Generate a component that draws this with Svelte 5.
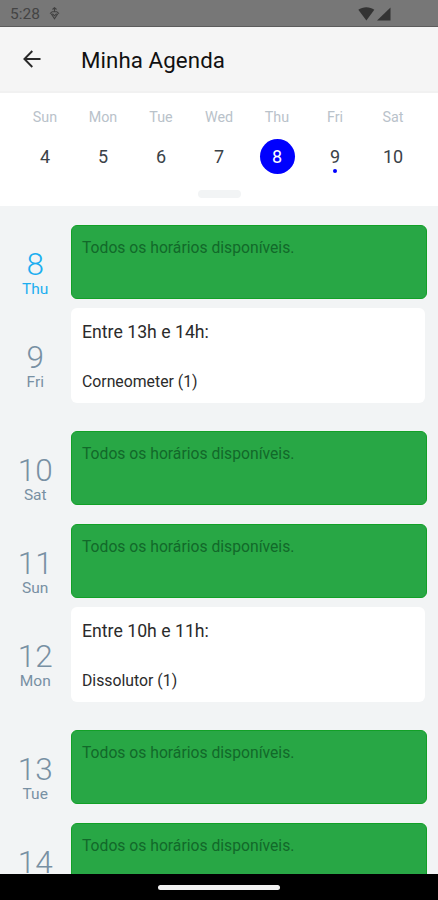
<script>
  const week = [
    { name: 'Sun', day: 4 },
    { name: 'Mon', day: 5 },
    { name: 'Tue', day: 6 },
    { name: 'Wed', day: 7 },
    { name: 'Thu', day: 8, selected: true },
    { name: 'Fri', day: 9, marked: true },
    { name: 'Sat', day: 10 }
  ];

  const agenda = [
    { day: 8, name: 'Thu', today: true },
    { day: 9, name: 'Fri', time: 'Entre 13h e 14h:', item: 'Corneometer (1)' },
    { day: 10, name: 'Sat' },
    { day: 11, name: 'Sun' },
    { day: 12, name: 'Mon', time: 'Entre 10h e 11h:', item: 'Dissolutor (1)' },
    { day: 13, name: 'Tue' },
    { day: 14 }
  ];
</script>

<div class="screen">
  <div class="status">
    <span class="clock">5:28</span>
    <svg class="debug" width="11" height="13" viewBox="0 0 11 13" fill="none" stroke="#404040" stroke-width="1.1">
      <path d="M5.5 0.6V4.5M3.5 2.5L5.5 0.7L7.5 2.5M1 6.7L3.2 4.7H7.8L10 6.7M2.2 6.8L5.5 11.8L8.8 6.8M3.4 6.6L5.5 8.8L7.6 6.6" />
    </svg>
    <svg class="signals" width="33" height="14" viewBox="0 0 33 14" fill="#333">
      <path d="M0.3 2.8C4.7 -0.7 12 -0.7 16.3 2.8L8.4 13.5Z" />
      <path d="M32.5 0.4V13.5H19Z" />
    </svg>
  </div>

  <header>
    <svg width="18" height="18" viewBox="0 0 18 18" fill="none" stroke="#292929" stroke-width="1.9">
      <path d="M17.5 9H1.5M9.3 1L1.4 9L9.3 17" />
    </svg>
    <h1>Minha Agenda</h1>
  </header>

  <section class="calendar">
    <div class="week">
      {#each week as d}
        <div class="column">
          <span class="weekday">{d.name}</span>
          <span class="date" class:selected={d.selected}>
            {d.day}
            {#if d.marked}<i class="dot"></i>{/if}
          </span>
        </div>
      {/each}
    </div>
    <div class="knob"></div>
  </section>

  <main>
    {#each agenda as a}
      <div class="row">
        <div class="label" class:today={a.today}>
          <span class="num">{a.day}</span>
          {#if a.name}<span class="name">{a.name}</span>{/if}
        </div>
        {#if a.time}
          <div class="card booked">
            <p class="time">{a.time}</p>
            <p class="item">{a.item}</p>
          </div>
        {:else}
          <div class="card free">Todos os horários disponíveis.</div>
        {/if}
      </div>
    {/each}
  </main>

  <footer><div class="pill"></div></footer>
</div>

<style>
  :global(body) {
    margin: 0;
  }
  .screen {
    width: 438px;
    height: 900px;
    display: flex;
    flex-direction: column;
    overflow: hidden;
    background: #f2f4f5;
    font-family: Roboto, 'Liberation Sans', sans-serif;
  }
  .status {
    flex: none;
    box-sizing: border-box;
    height: 27px;
    padding: 1px 47px 0 10px;
    display: flex;
    align-items: center;
    background: #777;
    border-bottom: 1px solid #5c5c5c;
    color: #444;
  }
  .clock {
    width: 39px;
    font-size: 15.5px;
    line-height: 20px;
  }
  .signals {
    margin-left: auto;
  }
  header {
    flex: none;
    box-sizing: border-box;
    height: 66px;
    padding: 0 23px;
    display: flex;
    align-items: center;
    gap: 40px;
    background: #f5f5f5;
    border-bottom: 2px solid #f1f1f1;
  }
  h1 {
    margin: 1px 0 0;
    font-size: 22.3px;
    line-height: 28px;
    font-weight: 400;
    letter-spacing: 0.08px;
    color: #111;
  }
  .calendar {
    flex: none;
    height: 113px;
    display: flex;
    flex-direction: column;
    align-items: center;
    background: #fff;
  }
  .week {
    width: 406px;
    height: 97px;
    display: flex;
  }
  .column {
    flex: 1;
    display: flex;
    flex-direction: column;
    align-items: center;
  }
  .weekday {
    margin-top: 15px;
    font-size: 14.3px;
    line-height: 18px;
    color: #b9c2ca;
  }
  .date {
    position: relative;
    width: 35px;
    height: 35px;
    margin-top: 13px;
    border-radius: 50%;
    font-size: 18px;
    line-height: 35px;
    text-align: center;
    color: #3a4248;
  }
  .selected {
    background: #0000fe;
    color: #fff;
  }
  .dot {
    position: absolute;
    left: 15.5px;
    top: 30px;
    width: 4px;
    height: 4px;
    border-radius: 50%;
    background: #0000fe;
  }
  .knob {
    width: 43px;
    height: 8px;
    border-radius: 4px;
    background: #f2f4f5;
  }
  main {
    flex: 1;
    min-height: 0;
    overflow: hidden;
  }
  .row {
    display: flex;
  }
  .label {
    width: 70.5px;
    padding-top: 43px;
    display: flex;
    flex-direction: column;
    align-items: center;
    color: #7890a3;
  }
  .num {
    font-size: 31.5px;
    line-height: 31px;
    font-weight: 350;
  }
  .name {
    font-size: 15.5px;
    line-height: 18px;
  }
  .today {
    color: #1caef0;
  }
  .card {
    box-sizing: border-box;
    border-radius: 6px;
  }
  .free {
    width: 356.7px;
    height: 74px;
    margin-top: 19.3px;
    padding: 12px 10.5px;
    border: 1px solid #12a027;
    background: #28a745;
    font-size: 15.7px;
    line-height: 19px;
    color: #12692a;
  }
  .booked {
    width: 354px;
    height: 95px;
    margin: 8.7px 0 8.8px;
    padding: 14px 11.5px;
    background: #fff;
    color: #2b2b2b;
  }
  .booked p {
    margin: 0;
  }
  .time {
    font-size: 17.7px;
    line-height: 21px;
  }
  .booked .item {
    margin-top: 29px;
    font-size: 15.8px;
    line-height: 19px;
  }
  footer {
    flex: none;
    height: 26px;
    display: flex;
    justify-content: center;
    align-items: center;
    background: #000;
  }
  .pill {
    width: 122px;
    height: 5px;
    border-radius: 3px;
    background: #f2f2f2;
  }
</style>
